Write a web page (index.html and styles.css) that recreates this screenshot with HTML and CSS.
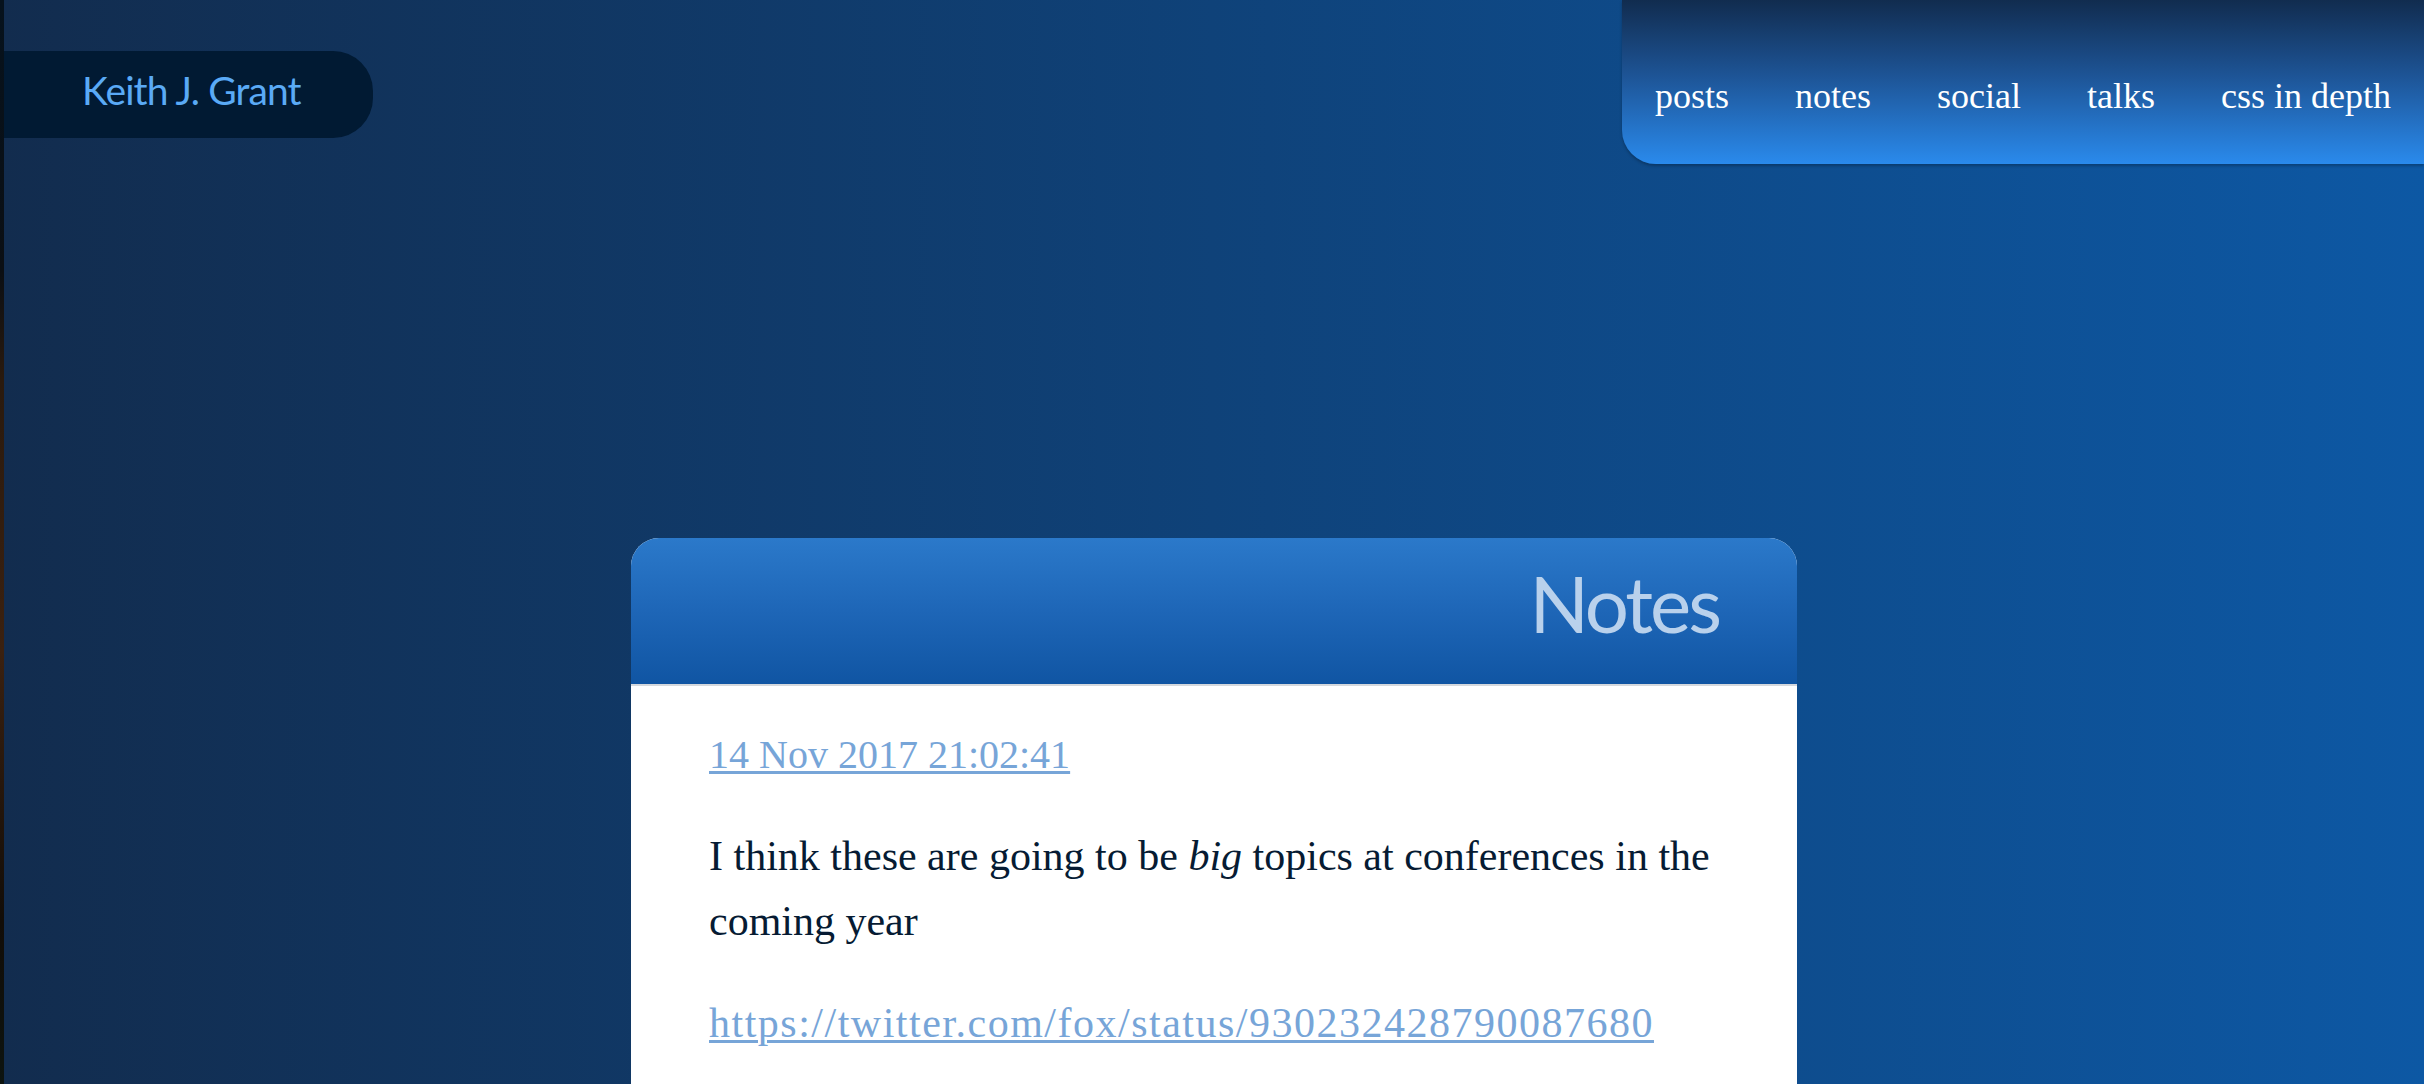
FILE: index.html
```html
<!DOCTYPE html>
<html lang="en">
<head>
<meta charset="utf-8">
<title>Notes — Keith J. Grant</title>
<link rel="stylesheet" href="styles.css">
</head>
<body>
<div class="edge"></div>
<div class="page">
  <header class="site-header">
    <a class="logo" href="#">Keith J. Grant</a>
    <nav class="nav">
      <a href="#">posts</a>
      <a href="#">notes</a>
      <a href="#">social</a>
      <a href="#">talks</a>
      <a href="#">css in depth</a>
    </nav>
  </header>
  <main class="card">
    <div class="card-header">
      <h1>Notes</h1>
    </div>
    <article class="card-body">
      <p class="date"><a href="#">14 Nov 2017 21:02:41</a></p>
      <p>I think these are going to be <em>big</em> topics at conferences in the coming year</p>
      <p><a class="url" href="#">https://twitter.com/fox/status/930232428790087680</a></p>
    </article>
  </main>
</div>
</body>
</html>
```
FILE: styles.css
```css
html, body {
  margin: 0;
  padding: 0;
  height: 100%;
  overflow: hidden;
}

body {
  display: flex;
  background: linear-gradient(to right, #122c4e 0%, #0f4279 50%, #0d58a4 100%);
  font-family: "Liberation Serif", serif;
}

.edge {
  width: 4px;
  flex: none;
  background: linear-gradient(to bottom, #06121d 0%, #0b0f14 25%, #2a1a0e 35%, #3b2110 60%, #120d08 85%, #0d1410 100%);
}

.page {
  flex: 1;
  display: flex;
  flex-direction: column;
  align-items: center;
}

.site-header {
  align-self: stretch;
  display: flex;
  justify-content: space-between;
  align-items: flex-start;
  height: 164px;
}

.logo {
  margin-top: 51px;
  box-sizing: border-box;
  width: 369px;
  height: 87px;
  padding: 0 0 9px 78px;
  background: #011a33;
  border-radius: 0 40px 40px 0;
  color: #5aaaf6;
  font-family: Lato, "Open Sans", sans-serif;
  font-size: 39px;
  line-height: 78px;
  text-decoration: none;
  letter-spacing: -0.9px;
  white-space: nowrap;
}

.nav {
  box-sizing: border-box;
  height: 164px;
  padding-top: 76px;
  display: flex;
  background: linear-gradient(to bottom, #112c4f 0%, #1d5394 45%, #2a8aec 100%);
  border-bottom-left-radius: 34px;
  box-shadow: 0 2px 3px rgba(0, 0, 0, 0.25);
}

.nav a {
  padding: 0 33px;
  color: #ffffff;
  font-size: 36px;
  line-height: 40px;
  text-decoration: none;
  white-space: nowrap;
}

.card {
  margin-top: 374px;
  width: 1166px;
  border-radius: 28px 28px 0 0;
  overflow: hidden;
  background: #ffffff;
}

.card-header {
  box-sizing: border-box;
  height: 148px;
  padding: 26px 78px 0 0;
  background: linear-gradient(to bottom, #2b79ca 0%, #1e66b7 50%, #1055a3 100%);
  border-bottom: 2px solid #d4d8dd;
  text-align: right;
}

.card-header h1 {
  margin: 0;
  color: #b9d1ec;
  font-family: Lato, "Open Sans", sans-serif;
  font-weight: 400;
  font-size: 78px;
  line-height: 78px;
  letter-spacing: -3px;
}

.card-body {
  padding: 36px 74px 60px 78px;
  color: #061b33;
  font-size: 42px;
  line-height: 65px;
}

.card-body p {
  margin: 0 0 37px 0;
}

.card-body .date {
  font-size: 40px;
}

.card-body a {
  color: #77a5d8;
  text-decoration: underline;
  text-decoration-thickness: 3px;
  text-underline-offset: 3px;
}

.card-body .url {
  letter-spacing: 1.5px;
}
```
